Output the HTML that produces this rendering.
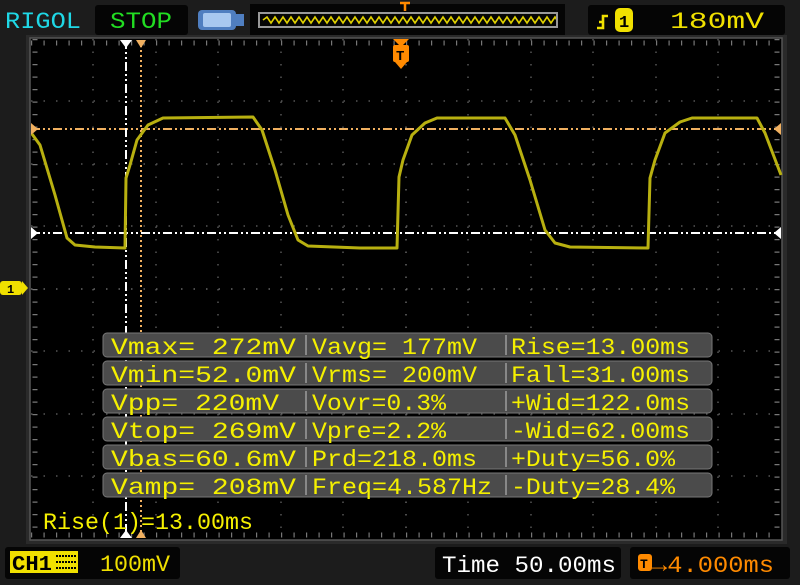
<!DOCTYPE html>
<html><head><meta charset="utf-8"><style>
html,body{margin:0;padding:0;background:#1c1c1c;width:800px;height:585px;overflow:hidden}
svg{display:block}
text{font-family:"Liberation Mono",monospace}
</style></head><body>
<svg width="800" height="585" viewBox="0 0 800 585" xmlns="http://www.w3.org/2000/svg">
<defs><clipPath id="zc"><rect x="260" y="13" width="296" height="14"/></clipPath></defs>
<rect width="800" height="585" fill="#1c1c1c"/>
<!-- top bar -->
<text x="5" y="28" fill="#1fd8e6" font-size="23" textLength="76" lengthAdjust="spacingAndGlyphs">RIGOL</text>
<rect x="95" y="5" width="93" height="30" rx="3" fill="#050505"/>
<text x="110" y="28" fill="#22dd22" font-size="23" textLength="62" lengthAdjust="spacingAndGlyphs">STOP</text>
<rect x="198" y="10" width="38" height="20" rx="4" fill="#4f7ec0"/>
<rect x="203" y="13" width="28" height="14" rx="2" fill="#a8c8f0"/>
<rect x="236" y="14" width="8" height="12" fill="#4f7ec0"/>
<rect x="250" y="4" width="315" height="32" fill="#050505"/>
<rect x="259" y="13" width="298" height="14" fill="none" stroke="#999" stroke-width="2"/>
<g clip-path="url(#zc)">
<path d="M263 20 l4-3 l4 6 l4-6 l4 6 l4-6 l4 6 l4-6 l4 6 l4-6 l4 6 l4-6 l4 6 l4-6 l4 6 l4-6 l4 6 l4-6 l4 6 l4-6 l4 6 l4-6 l4 6 l4-6 l4 6 l4-6 l4 6 l4-6 l4 6 l4-6 l4 6 l4-6 l4 6 l4-6 l4 6 l4-6 l4 6 l4-6 l4 6 l4-6 l4 6 l4-6 l4 6 l4-6 l4 6 l4-6 l4 6 l4-6 l4 6 l4-6 l4 6 l4-6 l4 6 l4-6 l4 6 l4-6 l4 6 l4-6 l4 6 l4-6 l4 6 l4-6 l4 6 l4-6 l4 6 l4-6 l4 6 l4-6 l4 6 l4-6 l4 6 l4-6 l4 6 l4-6 l4 6 l4-6 l4 6 l4-6 l4 6 l4-6 l4 6 l4-6 l4 6 l4-6 l4 6 l4-6 l4 6" fill="none" stroke="#e0d000" stroke-width="1.6"/>
</g>
<path d="M400 3 h10 M405 3 v8" stroke="#ff8a00" stroke-width="2.5"/>
<rect x="588" y="5" width="197" height="30" rx="3" fill="#050505"/>
<path d="M597 28 l6 0 l0 -12 l5 0 M599 22 l5 0" stroke="#f0e000" stroke-width="2.6" fill="none"/>
<rect x="615" y="8" width="18" height="24" rx="5" fill="#f0e000"/>
<text x="619" y="27" fill="#000" font-size="17" font-weight="bold">1</text>
<text x="670" y="28" fill="#f0e000" font-size="23" textLength="94" lengthAdjust="spacingAndGlyphs">180mV</text>
<!-- screen -->
<rect x="26" y="35" width="761" height="509" fill="#2a2a2a"/>
<rect x="30" y="38" width="752" height="502" fill="#000" stroke="#555" stroke-width="1.5"/>
<g>
<path d="M93 39v500 M156 39v500 M218 39v500 M281 39v500 M343 39v500 M468 39v500 M531 39v500 M593 39v500 M656 39v500 M718 39v500" stroke="#555" stroke-width="1.5" stroke-dasharray="1.5 11"/>
<path d="M31 101h750 M31 164h750 M31 226h750 M31 351h750 M31 414h750 M31 476h750" stroke="#555" stroke-width="1.5" stroke-dasharray="1.5 11"/>
<path d="M406 39v500" stroke="#666" stroke-width="1.5" stroke-dasharray="1.5 11"/>
<path d="M31 289h750" stroke="#666" stroke-width="1.5" stroke-dasharray="1.5 11"/>
<path d="M31 43h750 M31 535h750" stroke="#777" stroke-width="5" stroke-dasharray="1.2 11.3"/>
<path d="M35 39v500 M777 39v500" stroke="#777" stroke-width="5" stroke-dasharray="1.2 11.3"/>
</g>
<!-- cursors -->
<path d="M31 129h750" stroke="#f0b060" stroke-width="2" stroke-dasharray="9 3 2 3 2 3"/>
<path d="M31 233h750" stroke="#fff" stroke-width="2" stroke-dasharray="9 3 2 3 2 3"/>
<path d="M126 40v500" stroke="#fff" stroke-width="2" stroke-dasharray="9 3 2 3 2 3"/>
<path d="M141 40v500" stroke="#f0b060" stroke-width="2" stroke-dasharray="2 3"/>
<path d="M120 40h12l-6 8z" fill="#fff"/><path d="M136 40h10l-5 8z" fill="#f0b060"/>
<path d="M120 538h12l-6-8z" fill="#fff"/><path d="M136 538h10l-5-8z" fill="#f0b060"/>
<path d="M31 123v12l7-6z" fill="#f0b060"/><path d="M31 227v12l7-6z" fill="#fff"/>
<path d="M781 123v12l-7-6z" fill="#f0b060"/><path d="M781 227v12l-7-6z" fill="#fff"/>
<path d="M393 39h16l-8 8z" fill="#ff8a00"/>
<rect x="393" y="45" width="16" height="17" rx="2" fill="#ff8a00"/><path d="M395 62h12l-6 7z" fill="#ff8a00"/>
<text x="396" y="60" fill="#000" font-size="14" font-weight="bold">T</text>
<rect x="0" y="281" width="22" height="14" rx="3" fill="#f0e000"/><path d="M22 281l6 7l-6 7z" fill="#f0e000"/>
<text x="7" y="293" fill="#000" font-size="12" font-weight="bold">1</text>
<!-- waveform -->
<path d="M32 134 L40 145 L55 195 L67 238 L75 245 L95 247 L125 248 L126 178 L130 165 L137 140 L148 125 L163 118 L253 117 L262 130 L275 170 L288 215 L298 240 L308 246 L360 248 L397 248 L399 177 L403 160 L412 135 L425 123 L437 118 L505 118 L515 135 L530 180 L545 230 L555 243 L570 247 L648 248 L650 178 L655 160 L665 133 L680 122 L692 118 L757 118 L765 133 L781 175" fill="none" stroke="#b8b010" stroke-width="3" stroke-linejoin="round"/>
<!-- table -->
<g fill="#4b4b4b" stroke="#777" stroke-width="1">
<rect x="103" y="333" width="609" height="24" rx="4"/>
<rect x="103" y="361" width="609" height="24" rx="4"/>
<rect x="103" y="389" width="609" height="24" rx="4"/>
<rect x="103" y="417" width="609" height="24" rx="4"/>
<rect x="103" y="445" width="609" height="24" rx="4"/>
<rect x="103" y="473" width="609" height="24" rx="4"/>
</g>
<path d="M306 335v160 M506 335v160" stroke="#888" stroke-width="2" stroke-dasharray="20 8"/>
<g fill="#f5f000" font-size="23">
<text x="111" y="354" textLength="185" lengthAdjust="spacingAndGlyphs">Vmax= 272mV</text>
<text x="111" y="382" textLength="185" lengthAdjust="spacingAndGlyphs">Vmin=52.0mV</text>
<text x="111" y="410" textLength="168" lengthAdjust="spacingAndGlyphs">Vpp= 220mV</text>
<text x="111" y="438" textLength="185" lengthAdjust="spacingAndGlyphs">Vtop= 269mV</text>
<text x="111" y="466" textLength="185" lengthAdjust="spacingAndGlyphs">Vbas=60.6mV</text>
<text x="111" y="494" textLength="185" lengthAdjust="spacingAndGlyphs">Vamp= 208mV</text>
<text x="312" y="354" textLength="165" lengthAdjust="spacingAndGlyphs">Vavg= 177mV</text>
<text x="312" y="382" textLength="165" lengthAdjust="spacingAndGlyphs">Vrms= 200mV</text>
<text x="312" y="410" textLength="134" lengthAdjust="spacingAndGlyphs">Vovr=0.3%</text>
<text x="312" y="438" textLength="134" lengthAdjust="spacingAndGlyphs">Vpre=2.2%</text>
<text x="312" y="466" textLength="165" lengthAdjust="spacingAndGlyphs">Prd=218.0ms</text>
<text x="312" y="494" textLength="180" lengthAdjust="spacingAndGlyphs">Freq=4.587Hz</text>
<text x="511" y="354" textLength="179" lengthAdjust="spacingAndGlyphs">Rise=13.00ms</text>
<text x="511" y="382" textLength="179" lengthAdjust="spacingAndGlyphs">Fall=31.00ms</text>
<text x="511" y="410" textLength="179" lengthAdjust="spacingAndGlyphs">+Wid=122.0ms</text>
<text x="511" y="438" textLength="179" lengthAdjust="spacingAndGlyphs">-Wid=62.00ms</text>
<text x="511" y="466" textLength="164" lengthAdjust="spacingAndGlyphs">+Duty=56.0%</text>
<text x="511" y="494" textLength="164" lengthAdjust="spacingAndGlyphs">-Duty=28.4%</text>
<text x="43" y="529" textLength="210" lengthAdjust="spacingAndGlyphs">Rise(1)=13.00ms</text>
</g>
<!-- bottom -->
<rect x="5" y="547" width="175" height="32" rx="3" fill="#050505"/>
<rect x="10" y="551" width="68" height="22" fill="#f0e000"/>
<text x="12" y="570" fill="#000" font-size="21" font-weight="bold" textLength="40" lengthAdjust="spacingAndGlyphs">CH1</text>
<path d="M56 556h20M56 562h20M56 568h20" stroke="#000" stroke-width="2" stroke-dasharray="2 1"/>
<text x="100" y="571" fill="#f0e000" font-size="23" textLength="70" lengthAdjust="spacingAndGlyphs">100mV</text>
<rect x="435" y="547" width="186" height="32" rx="3" fill="#050505"/>
<text x="442" y="572" fill="#fff" font-size="23" textLength="174" lengthAdjust="spacingAndGlyphs">Time 50.00ms</text>
<rect x="630" y="547" width="160" height="32" rx="3" fill="#050505"/>
<rect x="638" y="554" width="14" height="17" rx="3" fill="#ff8a00"/>
<text x="640" y="568" fill="#000" font-size="13" font-weight="bold">T</text>
<text x="652" y="572" fill="#ff8a00" font-size="23" textLength="122" lengthAdjust="spacingAndGlyphs">→4.000ms</text>
</svg>
</body></html>
